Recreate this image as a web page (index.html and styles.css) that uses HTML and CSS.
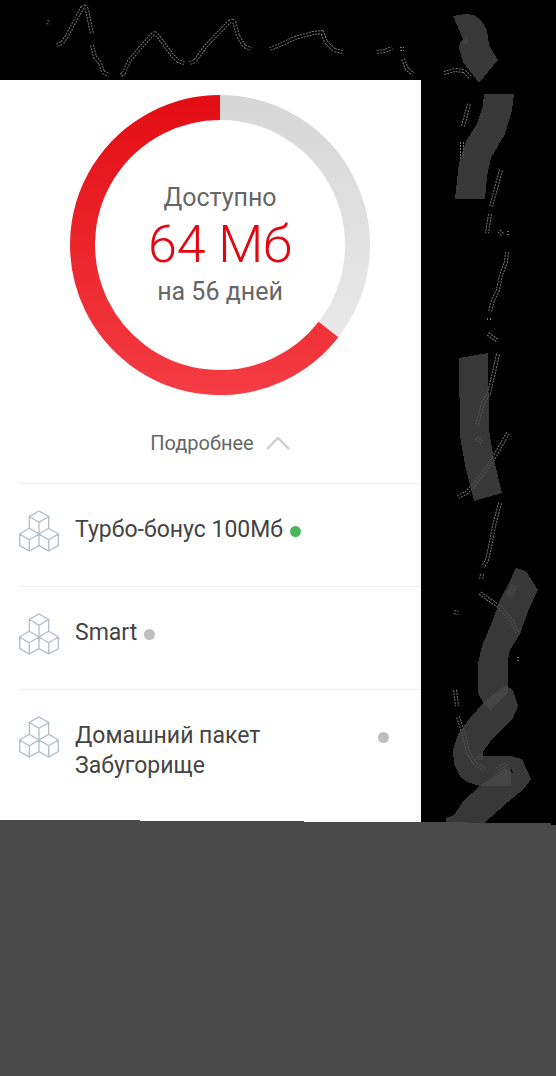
FILE: index.html
```
<!DOCTYPE html>
<html lang="ru">
<head>
<meta charset="utf-8">
<meta name="viewport" content="width=device-width, initial-scale=1">
<title>Остаток трафика</title>
<link rel="stylesheet" href="styles.css">
</head>
<body>
<svg class="scribbles" width="556" height="830" viewBox="0 0 556 830" aria-hidden="true">
  <defs>
    <path id="strokes" d="M47 22l3 1M57 45L62 43L67 36L77 17L82 8Q85 4 87 10L92 34M92 45L95 57L100 63L103 72L109 75M121 75L124 73L129 61L140 48L152 35Q155 31 158 36L172 55L178 61L184 63M190 63L195 61L205 47L228 23Q233 18 235 24L238 36L244 46L251 49M270 49L280 45L295 38L313 33L322 32L326 42L334 50L343 52M377 52L385 51L392 48M400 49h4M403 59L407 69L413 74M444 73L455 70L464 71L471 78M469 104L463 126M462 142V158M501 170L491 207M490 214L487 233M499 231L503 235M507 233h2M507 252L506 262L501 275L498 290L493 300L490 312M489 318v3M488 334L498 341M498 354L494 372L489 393L483 403L477 425M476 438L482 442M508 433L492 461L475 484L466 493L458 497M500 503L494 526L490 547L487 560L483 567M482 574L481 580M480 593L488 599L500 607L512 621L518 634M454 612L458 613M517 659h3M455 690L457 706M458 717L464 735L468 752L475 764L486 770M497 769L508 763"/>
    <mask id="outline" maskUnits="userSpaceOnUse" x="0" y="0" width="556" height="830">
      <use href="#strokes" class="outline-outer"/>
      <use href="#strokes" class="outline-inner"/>
    </mask>
  </defs>
  <rect class="outline-ink" width="556" height="830" mask="url(#outline)"/>
  <g class="ribbons" shape-rendering="crispEdges">
    <path d="M453 16L465 14L474 15L481 20L487 30L489 45L498 60L479 83L463 62L459 48L460 43L463 39Z"/>
    <path d="M463 40L466 36L469 42L465 44L460 43Z" class="faint"/>
    <path d="M484 94H514L512 110L505 134L491 158L487 176L485 199H455L459 163L466 141L477 124L483 105Z"/>
    <path d="M459 358L488 353L489 430L494 460L502 493L474 501L465 465L460 436Z"/>
    <path d="M516 568L526 571L538 590L529 609L520 634L510 650L508 660V692L490 710L483 702L478 693V663L482 646L492 622L500 600L509 583Z"/>
    <path d="M511 584L518 586L512 598L505 595Z" class="faint"/>
    <path d="M506 685L513 690L518 706L513 718L490 742L483 752V756H511V786H479L470 783L461 778L454 764L453 750L458 734L470 718L484 702Z"/>
    <path d="M475 758L480 754H483V760H474Z" class="faint"/>
    <path d="M511 756L522 759L531 779L524 789L508 802L482 825H446V818L454 815L464 800L480 786L505 768L513 773L511 768Z"/>
  </g>
</svg>

<header class="top"></header>
<div class="columns">
  <main class="card">
    <section class="usage">
      <svg class="ring" viewBox="0 0 300 300" aria-hidden="true">
        <defs>
          <linearGradient id="rest" gradientUnits="userSpaceOnUse" x1="0" y1="0" x2="0" y2="300">
            <stop offset="0" stop-color="#d6d6d6"/><stop offset="1" stop-color="#eeeeee"/>
          </linearGradient>
          <linearGradient id="used" gradientUnits="userSpaceOnUse" x1="0" y1="0" x2="0" y2="300">
            <stop offset="0" stop-color="#e30d12"/><stop offset="1" stop-color="#f43c44"/>
          </linearGradient>
        </defs>
        <path class="arc" stroke="url(#rest)" d="M150 12.500A137.500 137.500 0 0 1 258.500 234.500"/>
        <path class="arc" stroke="url(#used)" d="M258.500 234.500A137.500 137.500 0 1 1 150 12.500"/>
      </svg>
      <div class="summary">
        <p class="note">Доступно</p>
        <p class="amount">64 Мб</p>
        <p class="note">на 56 дней</p>
      </div>
    </section>

    <button class="more" type="button">Подробнее
      <svg width="24" height="14" viewBox="0 0 24 14" aria-hidden="true"><path d="M1 13L12 2L23 13"/></svg>
    </button>

    <svg class="sprite" aria-hidden="true">
      <symbol id="cubes" viewBox="0 0 40 42">
        <path d="M20 1L29.700 6.500V18.200L20 24L10.300 18.200V6.500ZM10.300 6.500L20 12.300L29.700 6.500M20 12.300V24M10.300 18.200L20 24V35.500L10.300 41L.700 35.500V24ZM.700 24L10.300 29.800L20 24M10.300 29.800V41M29.700 18.200L39.300 24V35.500L29.700 41L20 35.500V24ZM20 24L29.700 29.800L39.300 24M29.700 29.800V41"/>
      </symbol>
    </svg>
    <ul class="packages">
      <li class="package">
        <svg class="cubes" aria-hidden="true"><use href="#cubes"/></svg>
        <span class="name">Турбо-бонус 100Мб</span>
        <span class="dot dot-on"></span>
      </li>
      <li class="package">
        <svg class="cubes" aria-hidden="true"><use href="#cubes"/></svg>
        <span class="name">Smart</span>
        <span class="dot"></span>
      </li>
      <li class="package">
        <svg class="cubes" aria-hidden="true"><use href="#cubes"/></svg>
        <span class="name">Домашний пакет Забугорище</span>
        <span class="dot"></span>
      </li>
    </ul>
  </main>
  <aside class="side"></aside>
</div>
<footer class="bottom"></footer>
</body>
</html>
```
FILE: styles.css
```
* { box-sizing: border-box; }

body {
  display: flex;
  flex-direction: column;
  min-height: 100vh;
  margin: 0;
  background: #000;
  color: #444;
  font-family: Roboto, "Noto Sans", sans-serif;
}

.scribbles {
  position: absolute;
  top: 0;
  left: 0;
  z-index: -1;
}
.outline-outer, .outline-inner { fill: none; stroke-linejoin: round; }
.outline-outer { stroke: #fff; stroke-width: 4; stroke-dasharray: 2 1; }
.outline-inner { stroke: #000; stroke-width: 2; }
.outline-ink { fill: #777; }
.ribbons { fill: #4a4a4a; fill-opacity: .76; }
.faint { fill-opacity: .5; }

.top { height: 80px; }
.columns { display: flex; }
.side { flex: 0 0 135px; }

.card {
  flex: 1;
  min-width: 0;
  padding: 15px 0 10px 19px;
  background: #fff;
}

.usage {
  display: grid;
  justify-content: center;
  align-items: center;
}
.ring { grid-area: 1 / 1; width: 300px; height: 300px; }
.arc { fill: none; stroke-width: 25; }
.summary { grid-area: 1 / 1; text-align: center; }
.summary p { margin: 0; }
.note { color: #666; font-size: 25px; line-height: 32px; }
.amount { color: #e30611; font-size: 52px; font-weight: 300; line-height: 62px; }

.more {
  display: flex;
  align-items: center;
  justify-content: center;
  gap: 12px;
  width: 100%;
  height: 88px;
  padding: 8px 0 0;
  border: 0;
  background: none;
  color: #666;
  font: 20px/24px Roboto, "Noto Sans", sans-serif;
}
.more svg { fill: none; stroke: #c8cbcf; stroke-width: 2; }

.sprite { display: none; }
.packages { margin: 0; padding: 0; list-style: none; }
.package {
  display: flex;
  align-items: flex-start;
  min-height: 103px;
  padding: 26px 32px 34px 0;
  border-top: 1px solid #f0f0f0;
}
.cubes {
  flex: none;
  width: 40px;
  height: 42px;
  margin-right: 16px;
  fill: none;
  stroke: #b0bcc8;
  stroke-width: 1.3;
}
.name { padding-top: 5px; font-size: 23px; line-height: 30px; }
.dot {
  flex: none;
  width: 11px;
  height: 11px;
  margin: 16px 0 0 7px;
  border-radius: 50%;
  background: #bebebe;
}
.dot-on { background: #4ab55b; }

/* The lower panel has a stepped, uneven top edge that overlaps the columns. */
.bottom {
  flex: 1;
  margin-top: -5px;
  background: #4a4a4a;
  clip-path: polygon(0 0, 140px 0, 140px 1px, 304px 1px, 304px 2px, 468px 2px, 468px 3px, 551px 3px, 551px 5px, 100% 5px, 100% 100%, 0 100%);
}
```
